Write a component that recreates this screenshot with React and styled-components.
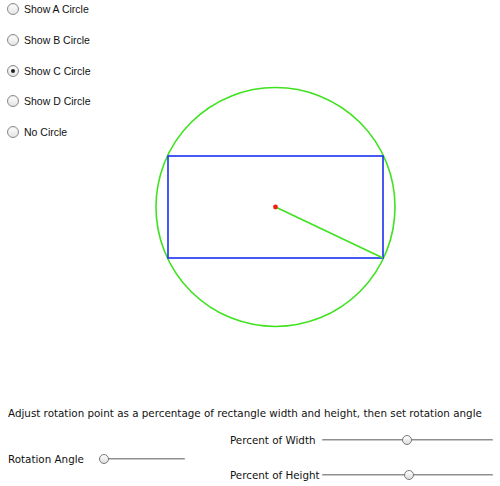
import React, { useState } from "react";
import styled, { createGlobalStyle } from "styled-components";

const Global = createGlobalStyle`
  html, body { margin: 0; padding: 0; background: #fff; }
  body { width: 500px; height: 486px; overflow: hidden; }
`;

const Page = styled.div`
  width: 500px;
  height: 486px;
  display: flex;
  flex-direction: column;
  background: #fff;
`;

const Top = styled.div`
  display: flex;
  height: 405px;
`;

const RadioColumn = styled.div`
  width: 150px;
  display: flex;
  flex-direction: column;
  gap: 18.75px;
  padding: 3px 0 0 7px;
  box-sizing: border-box;
`;

const RadioRow = styled.label`
  display: flex;
  align-items: center;
  gap: 5px;
  height: 12px;
  font-family: "Liberation Sans", Arial, sans-serif;
  font-size: 10.5px;
  color: #111;
  cursor: pointer;
`;

const Radio = styled.input.attrs({ type: "radio" })`
  appearance: none;
  margin: 0;
  width: 12px;
  height: 12px;
  border-radius: 50%;
  border: 1px solid #8a8a8a;
  background: linear-gradient(#ffffff, #e4e4e4);
  box-sizing: border-box;
  display: grid;
  place-items: center;
  box-shadow: inset 0 1px 1px rgba(0, 0, 0, 0.08);
  &:checked::after {
    content: "";
    width: 4px;
    height: 4px;
    border-radius: 50%;
    background: #222;
  }
`;

const Canvas = styled.svg`
  display: block;
  width: 350px;
  height: 405px;
`;

const Bottom = styled.div`
  display: flex;
  flex-direction: column;
  padding: 0 7px 0 8px;
  font-family: "DejaVu Sans", Verdana, sans-serif;
  font-size: 10.35px;
  color: #111;
`;

const Caption = styled.div`
  height: 16px;
  line-height: 16px;
`;

const Controls = styled.div`
  display: flex;
  align-items: center;
  margin-top: 12px;
  gap: 45px;
`;

const AngleGroup = styled.div`
  display: flex;
  align-items: center;
  gap: 15px;
  margin-top: 3px;
`;

const PercentGrid = styled.div`
  display: grid;
  grid-template-columns: 90px 171px;
  column-gap: 2px;
  row-gap: 21px;
  align-items: center;
`;

const Label = styled.span`
  white-space: nowrap;
  line-height: 14px;
`;

const Slider = styled.input.attrs({ type: "range" })`
  appearance: none;
  -webkit-appearance: none;
  margin: 0;
  width: ${(p) => p.$w}px;
  height: 12px;
  background: transparent;
  &::-webkit-slider-runnable-track {
    height: 2px;
    background: #8e8e8e;
    border-radius: 1px;
    border-bottom: 1px solid #c8c8c8;
  }
  &::-webkit-slider-thumb {
    -webkit-appearance: none;
    width: 10px;
    height: 10px;
    margin-top: -4px;
    border-radius: 50%;
    border: 1px solid #7a7a7a;
    background: linear-gradient(#ffffff, #dcdcdc);
    box-sizing: border-box;
  }
`;

export default function App() {
  const [choice, setChoice] = useState("C");
  const [w, setW] = useState(50);
  const [h, setH] = useState(51);
  const [a, setA] = useState(0);
  const options = [
    ["A", "Show A Circle"],
    ["B", "Show B Circle"],
    ["C", "Show C Circle"],
    ["D", "Show D Circle"],
    ["N", "No Circle"],
  ];
  return (
    <Page>
      <Global />
      <Top>
        <RadioColumn>
          {options.map(([k, t]) => (
            <RadioRow key={k}>
              <Radio name="circle" checked={choice === k} onChange={() => setChoice(k)} />
              {t}
            </RadioRow>
          ))}
        </RadioColumn>
        <Canvas viewBox="150 0 350 405">
          <circle cx="275.5" cy="207" r="119.5" fill="none" stroke="#3ee21e" strokeWidth="1.6" />
          <rect x="168" y="156" width="215" height="102" fill="none" stroke="#1a30f0" strokeWidth="1.6" />
          <line x1="275.5" y1="207" x2="383" y2="258" stroke="#3ee21e" strokeWidth="1.6" />
          <circle cx="275.5" cy="207" r="2.4" fill="#f02010" />
        </Canvas>
      </Top>
      <Bottom>
        <Caption>Adjust rotation point as a percentage of rectangle width and height, then set rotation angle</Caption>
        <Controls>
          <AngleGroup>
            <Label>Rotation Angle</Label>
            <Slider $w={86} min="0" max="360" value={a} onChange={(e) => setA(+e.target.value)} />
          </AngleGroup>
          <PercentGrid>
            <Label>Percent of Width</Label>
            <Slider $w={171} min="0" max="100" value={w} onChange={(e) => setW(+e.target.value)} />
            <Label>Percent of Height</Label>
            <Slider $w={171} min="0" max="100" value={h} onChange={(e) => setH(+e.target.value)} />
          </PercentGrid>
        </Controls>
      </Bottom>
    </Page>
  );
}
